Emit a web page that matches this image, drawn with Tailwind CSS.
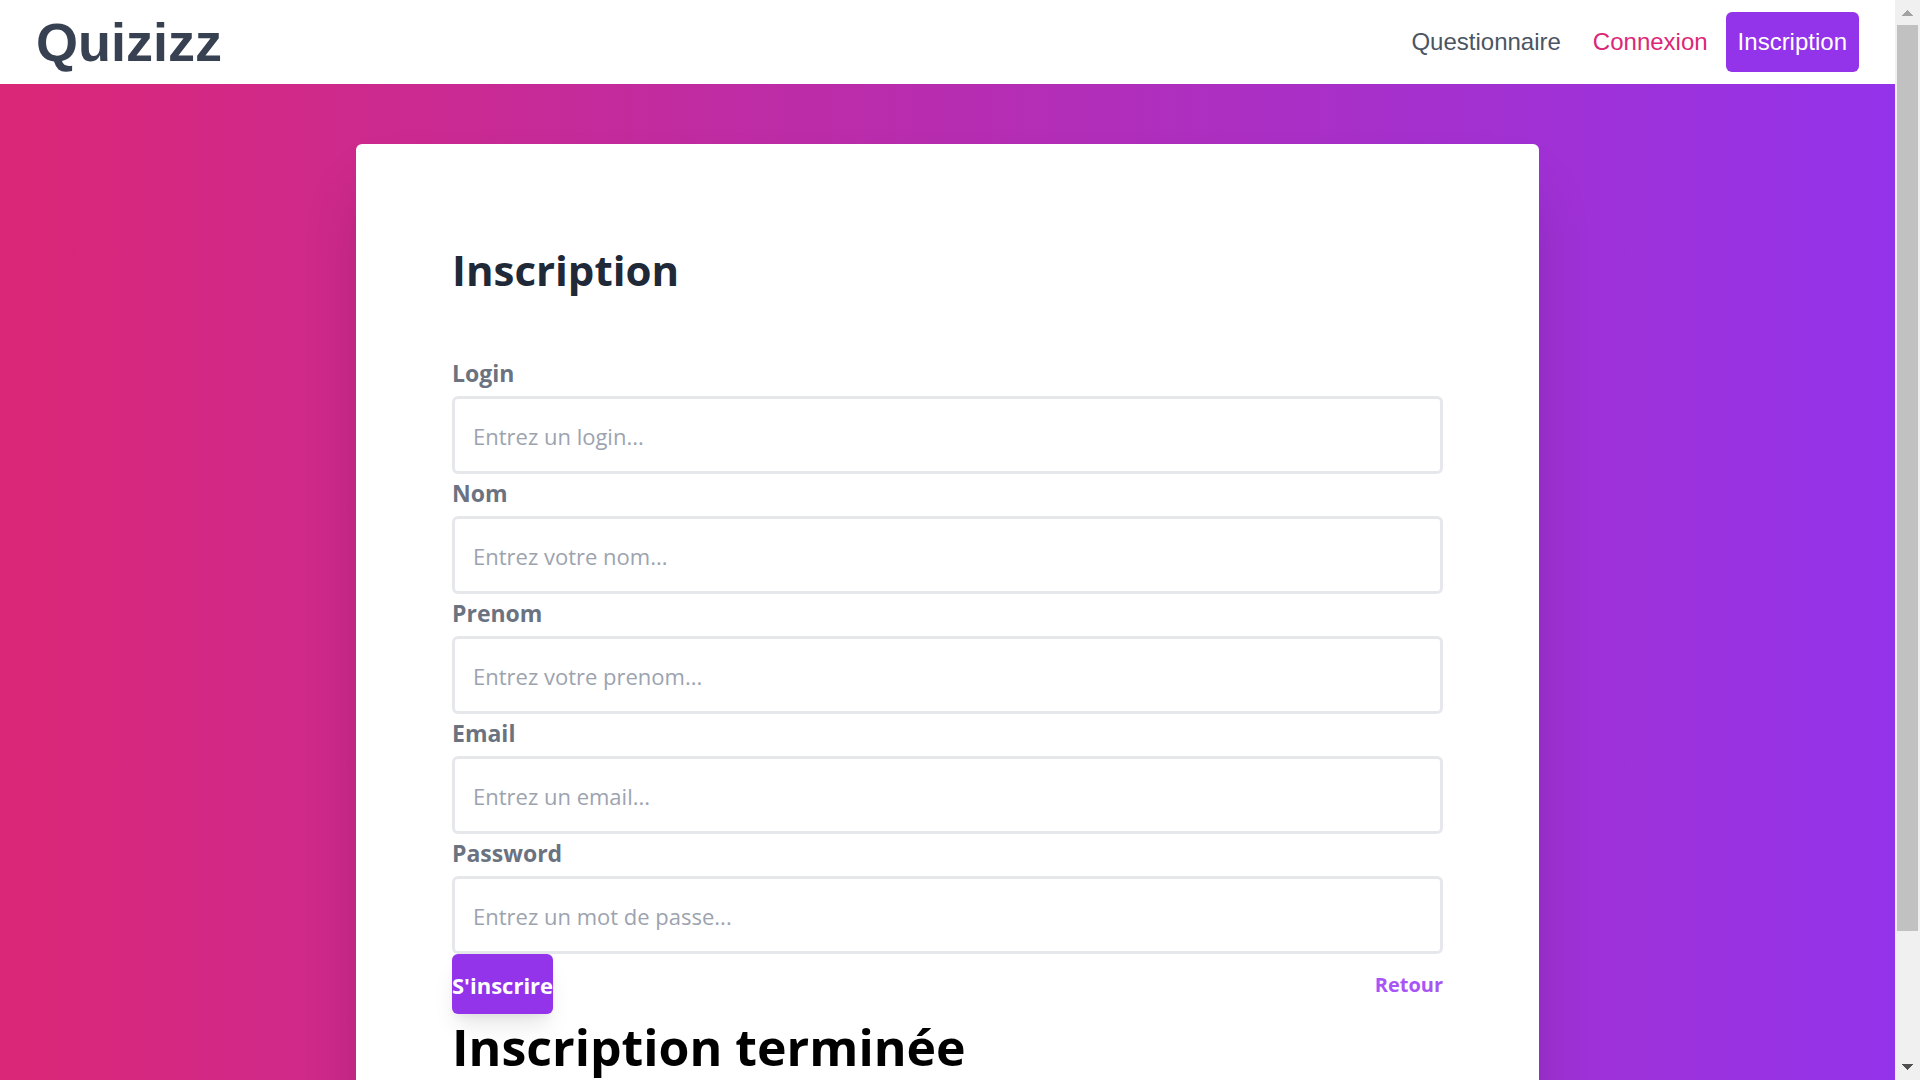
<!DOCTYPE html>
<html lang="fr">
<head>
<meta charset="utf-8">
<meta name="viewport" content="width=device-width, initial-scale=1">
<title>Quizizz - Inscription</title>
<script src="https://cdn.jsdelivr.net/npm/@tailwindcss/browser@4"></script>
</head>
<body class="flex h-screen overflow-hidden font-['Open_Sans',sans-serif] text-black">
  <div class="min-w-0 flex-1 overflow-hidden bg-linear-to-r/srgb from-[#db2777] to-[#9333ea]">
    <header class="flex h-21 items-center justify-between bg-white px-9 font-['Liberation_Sans',sans-serif]">
      <a href="#" class="text-[54px] leading-none font-bold text-[#374151]">Quizizz</a>
      <nav class="flex items-center text-[24px] leading-9">
        <a href="#" class="px-4 text-[#4b5563]">Questionnaire</a>
        <a href="#" class="pr-[18px] pl-4 text-[#db2777]">Connexion</a>
        <a href="#" class="rounded-md bg-[#9333ea] px-3 py-3 text-white">Inscription</a>
      </nav>
    </header>
    <main class="px-[356px] pt-15">
      <section class="rounded-md bg-white p-24 shadow-[0_38px_60px_-18px_rgba(0,0,0,0.25)]">
        <h2 class="mb-[54px] text-[42px] leading-[60px] font-bold text-[#1f2937]">Inscription</h2>
        <form class="flex flex-col text-[22px] leading-[38px]">
          <label for="login" class="mb-1 text-[23px] font-bold text-[#6b7280]">Login</label>
          <input id="login" type="text" placeholder="Entrez un login..." class="h-[78px] w-full rounded-md border-3 border-[#e5e7eb] px-[18px] pt-0.5 placeholder:text-[#9ca3af]">
          <label for="nom" class="mb-1 text-[23px] font-bold text-[#6b7280]">Nom</label>
          <input id="nom" type="text" placeholder="Entrez votre nom..." class="h-[78px] w-full rounded-md border-3 border-[#e5e7eb] px-[18px] pt-0.5 placeholder:text-[#9ca3af]">
          <label for="prenom" class="mb-1 text-[23px] font-bold text-[#6b7280]">Prenom</label>
          <input id="prenom" type="text" placeholder="Entrez votre prenom..." class="h-[78px] w-full rounded-md border-3 border-[#e5e7eb] px-[18px] pt-0.5 placeholder:text-[#9ca3af]">
          <label for="email" class="mb-1 text-[23px] font-bold text-[#6b7280]">Email</label>
          <input id="email" type="email" placeholder="Entrez un email..." class="h-[78px] w-full rounded-md border-3 border-[#e5e7eb] px-[18px] pt-0.5 placeholder:text-[#9ca3af]">
          <label for="password" class="mb-1 text-[23px] font-bold text-[#6b7280]">Password</label>
          <input id="password" type="password" placeholder="Entrez un mot de passe..." class="h-[78px] w-full rounded-md border-3 border-[#e5e7eb] px-[18px] pt-0.5 placeholder:text-[#9ca3af]">
          <div class="flex items-center justify-between">
            <button type="submit" class="h-15 rounded-md bg-[#9333ea] pt-0.5 font-bold text-white shadow-[0_15px_23px_-5px_rgba(0,0,0,0.1),0_6px_9px_-3px_rgba(0,0,0,0.05)]">S'inscrire</button>
            <a href="#" class="pt-0.5 text-[20px] font-bold text-[#a855f7]">Retour</a>
          </div>
        </form>
        <h1 class="text-[50px] leading-[66px] font-bold">Inscription terminée</h1>
      </section>
    </main>
  </div>
  <div class="flex w-[25px] shrink-0 flex-col items-center bg-[#f0f0f0]" aria-hidden="true">
    <svg class="h-[25px] w-[25px] shrink-0" viewBox="0 0 25 25" shape-rendering="crispEdges"><path d="M7 16 12.500 10 18 16z" fill="#a3a3a3"/></svg>
    <div class="flex w-[21px] flex-1 flex-col">
      <div class="h-[88%] bg-[#c1c1c1]"></div>
    </div>
    <svg class="h-[25px] w-[25px] shrink-0" viewBox="0 0 25 25" shape-rendering="crispEdges"><path d="M7 9 12.500 15 18 9z" fill="#505050"/></svg>
  </div>
</body>
</html>
